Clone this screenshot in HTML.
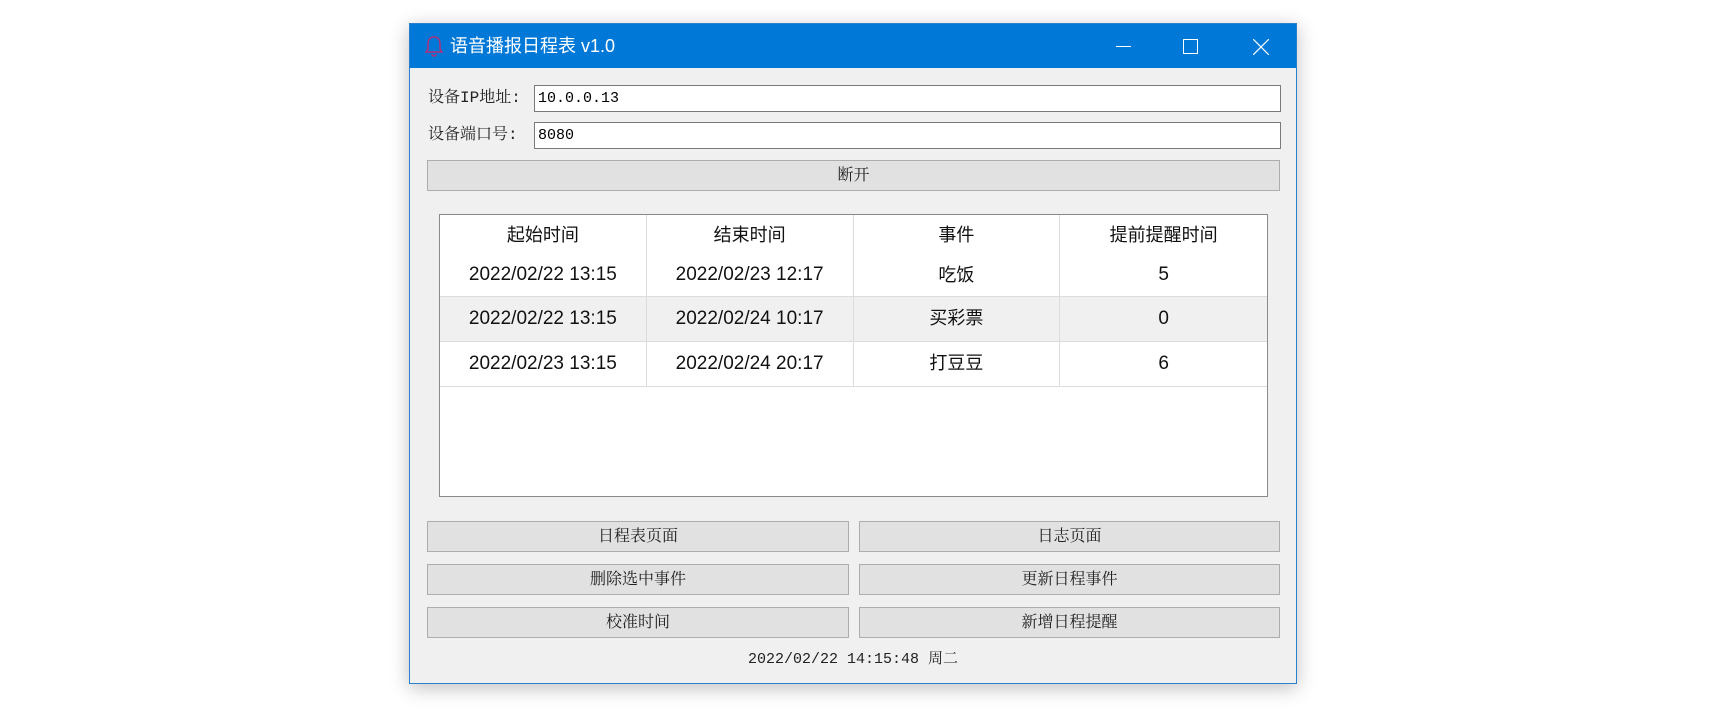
<!DOCTYPE html>
<html><head><meta charset="utf-8"><style>
*{margin:0;padding:0;box-sizing:border-box}
body{width:1716px;height:713px;background:#fff;position:relative;overflow:hidden;font-family:"Liberation Mono","Noto Serif CJK SC",serif}
.win{position:absolute;left:409px;top:23px;width:888px;height:661px;background:#f0f0f0;border:1px solid #2b7fcf;box-shadow:0 4px 18px rgba(0,0,0,.25)}
.title{position:absolute;left:0;top:0;width:886px;height:44px;background:#0078d7;color:#fff;font-family:"Liberation Sans","Noto Sans CJK SC",sans-serif;font-size:18px;line-height:44px}
.abs{position:absolute}
.lbl{position:absolute;font-size:16px;color:#222;line-height:27px}
.inp{position:absolute;background:#fff;border:1px solid #7a7a7a;font-size:15px;line-height:25px;padding-left:3px;color:#000}
.btn{position:absolute;background:#e1e1e1;border:1px solid #adadad;font-size:16px;color:#222;text-align:center}
.tbl{position:absolute;left:29px;top:190px;width:829px;height:283px;background:#fff;border:1px solid #8a8a8a;overflow:hidden;font-family:"Liberation Sans","Noto Sans CJK SC",sans-serif;color:#111}
.row{position:absolute;left:0;width:827px;display:flex}
.row div{width:207px;text-align:center;border-right:1px solid #dcdcdc;font-size:19px}
.row div:last-child{border-right:none}
.row .c{font-size:18px}
</style></head><body>
<div class="win">
 <div class="title">
  <svg class="abs" style="left:14px;top:11px" width="20" height="22" viewBox="0 0 20 22"><path d="M10 2c-4 0-6 3-6 7v5l-2 3h16l-2-3V9c0-4-2-7-6-7z M8 19a2 2 0 0 0 4 0" fill="none" stroke="#b0307a" stroke-width="1.5"/></svg>
  <span class="abs" style="left:40px;top:0">语音播报日程表 v1.0</span>
  <div class="abs" style="left:706px;top:22px;width:15px;height:1px;background:#fff"></div>
  <div class="abs" style="left:773px;top:15px;width:15px;height:15px;border:1px solid #fff"></div>
  <svg class="abs" style="left:843px;top:15px" width="16" height="16"><path d="M0 0L16 16M16 0L0 16" stroke="#fff" stroke-width="1.2"/></svg>
 </div>
 <div class="lbl" style="left:18px;top:61px">设备IP地址:</div>
 <div class="inp" style="left:124px;top:61px;width:747px;height:27px">10.0.0.13</div>
 <div class="lbl" style="left:18px;top:98px">设备端口号:</div>
 <div class="inp" style="left:124px;top:98px;width:747px;height:27px">8080</div>
 <div class="btn" style="left:17px;top:136px;width:853px;height:31px;line-height:31px">断开</div>
 <div class="tbl">
  <div class="row" style="top:0;height:41px;line-height:41px"><div class="c">起始时间</div><div class="c">结束时间</div><div class="c">事件</div><div class="c">提前提醒时间</div></div>
  <div class="row" style="top:41px;height:40px;line-height:38px"><div>2022/02/22 13:15</div><div>2022/02/23 12:17</div><div class="c">吃饭</div><div>5</div></div>
  <div class="row" style="top:81px;height:45px;line-height:43px;background:#f0f0f0;border-top:1px solid #dcdcdc"><div>2022/02/22 13:15</div><div>2022/02/24 10:17</div><div class="c">买彩票</div><div>0</div></div>
  <div class="row" style="top:126px;height:46px;line-height:43px;border-top:1px solid #dcdcdc;border-bottom:1px solid #dcdcdc"><div>2022/02/23 13:15</div><div>2022/02/24 20:17</div><div class="c">打豆豆</div><div>6</div></div>
 </div>
 <div class="btn" style="left:17px;top:497px;width:422px;height:31px;line-height:31px">日程表页面</div>
 <div class="btn" style="left:449px;top:497px;width:421px;height:31px;line-height:31px">日志页面</div>
 <div class="btn" style="left:17px;top:540px;width:422px;height:31px;line-height:31px">删除选中事件</div>
 <div class="btn" style="left:449px;top:540px;width:421px;height:31px;line-height:31px">更新日程事件</div>
 <div class="btn" style="left:17px;top:583px;width:422px;height:31px;line-height:31px">校准时间</div>
 <div class="btn" style="left:449px;top:583px;width:421px;height:31px;line-height:31px">新增日程提醒</div>
 <div class="abs" style="left:0;width:886px;top:624px;text-align:center;font-size:15px;color:#222;line-height:24px">2022/02/22 14:15:48 周二</div>
</div>
</body></html>
